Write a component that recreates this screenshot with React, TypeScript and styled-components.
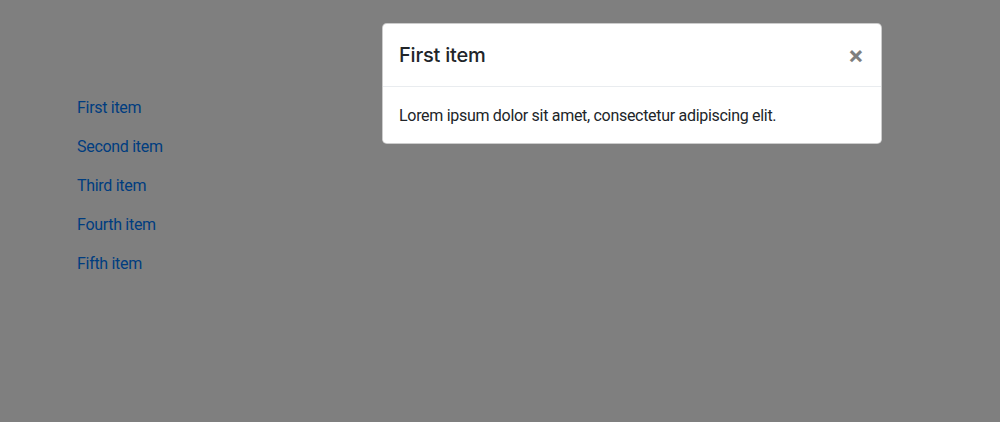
import styled, { createGlobalStyle } from "styled-components";

const GlobalStyle = createGlobalStyle`
  html, body {
    margin: 0;
    padding: 0;
    background: #fff;
    font-family: Roboto, "Liberation Sans", sans-serif;
    color: #212529;
  }
`;

const Page = styled.div`
  position: relative;
  width: 1000px;
  height: 422px;
  overflow: hidden;
`;

const Nav = styled.nav`
  display: flex;
  flex-direction: column;
  gap: 15px;
  padding: 96px 0 0 77px;
`;

const NavLink = styled.a`
  color: #007bff;
  font-size: 16px;
  line-height: 24px;
  letter-spacing: -0.3px;
  text-decoration: none;
  width: fit-content;
`;

const Backdrop = styled.div`
  position: absolute;
  inset: 0;
  background: rgba(0, 0, 0, 0.5);
`;

const Modal = styled.div`
  position: absolute;
  top: 23px;
  left: 382px;
  width: 500px;
  box-sizing: border-box;
  background: #fff;
  border: 1px solid rgba(0, 0, 0, 0.2);
  border-radius: 4.8px;
`;

const ModalHeader = styled.div`
  display: flex;
  align-items: center;
  justify-content: space-between;
  padding: 16px;
  border-bottom: 1px solid #e9ecef;
`;

const ModalTitle = styled.h5`
  margin: 0;
  font-family: Inter, Roboto, sans-serif;
  font-size: 20px;
  font-weight: 500;
  line-height: 30px;
  letter-spacing: -0.2px;
`;

const CloseButton = styled.button`
  border: 0;
  background: transparent;
  padding: 0;
  margin-right: 1px;
  color: #000;
  opacity: 0.5;
  font-size: 24px;
  font-weight: 700;
  line-height: 1;
  font-family: Inter, sans-serif;
  cursor: pointer;
`;

const ModalBody = styled.div`
  padding: 17px 16px 15px;
  font-size: 16px;
  line-height: 24px;
  letter-spacing: -0.3px;
`;

const items = ["First item", "Second item", "Third item", "Fourth item", "Fifth item"];

export default function App() {
  return (
    <Page>
      <GlobalStyle />
      <Nav>
        {items.map((item) => (
          <NavLink key={item} href="#">
            {item}
          </NavLink>
        ))}
      </Nav>
      <Backdrop />
      <Modal>
        <ModalHeader>
          <ModalTitle>First item</ModalTitle>
          <CloseButton aria-label="Close">×</CloseButton>
        </ModalHeader>
        <ModalBody>Lorem ipsum dolor sit amet, consectetur adipiscing elit.</ModalBody>
      </Modal>
    </Page>
  );
}
